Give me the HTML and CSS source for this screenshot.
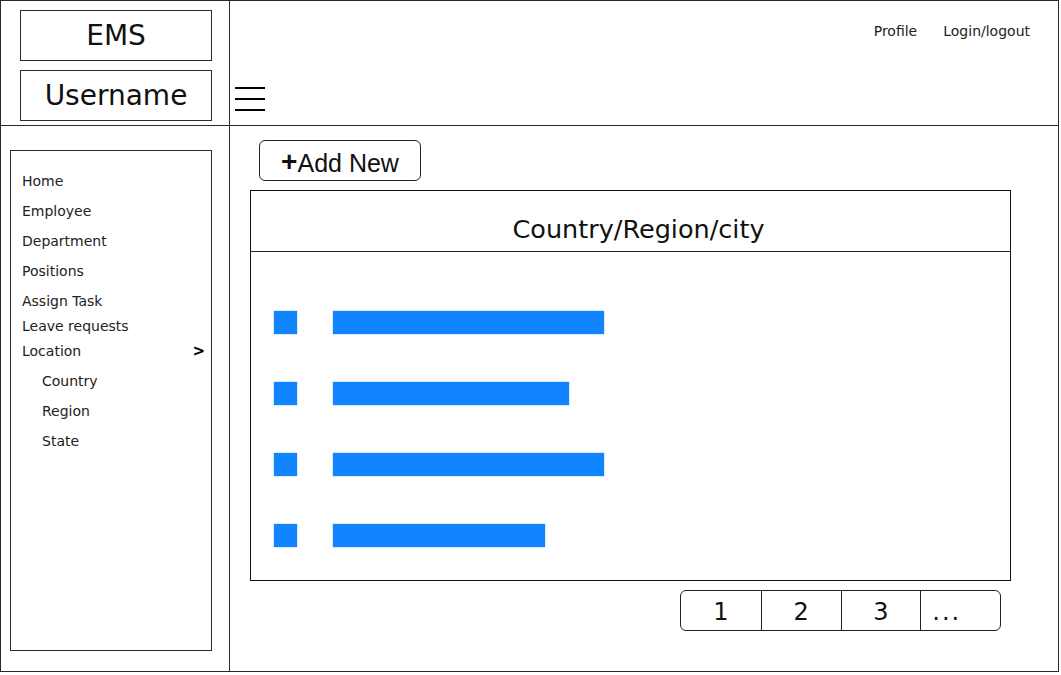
FILE: index.html
```html
<!DOCTYPE html>
<html>
<head>
<meta charset="utf-8">
<link rel="stylesheet" href="styles.css">
</head>
<body>
<div class="app">
  <div class="brand-cell">
    <div class="brand-box">EMS</div>
    <div class="brand-box">Username</div>
  </div>
  <div class="top-cell">
    <div class="top-links">
      <span class="top-link">Profile</span>
      <span class="top-link">Login/logout</span>
    </div>
    <div class="hamburger"><span></span><span></span><span></span></div>
  </div>
  <div class="side-cell">
    <nav class="side-box">
      <div class="nav-item">Home</div>
      <div class="nav-item">Employee</div>
      <div class="nav-item">Department</div>
      <div class="nav-item">Positions</div>
      <div class="nav-item">Assign Task</div>
      <div class="nav-item tight">Leave requests</div>
      <div class="nav-item tight">Location <span class="chev">&gt;</span></div>
      <div class="nav-item sub">Country</div>
      <div class="nav-item sub">Region</div>
      <div class="nav-item sub">State</div>
    </nav>
  </div>
  <main class="main-cell">
    <button class="add-btn"><span class="plus">+</span>Add New</button>
    <section class="table">
      <div class="table-head">Country/Region/city</div>
      <div class="table-body">
        <div class="row"><span class="dot"></span><span class="bar" style="width:271px"></span></div>
        <div class="row"><span class="dot"></span><span class="bar" style="width:236px"></span></div>
        <div class="row"><span class="dot"></span><span class="bar" style="width:271px"></span></div>
        <div class="row"><span class="dot"></span><span class="bar" style="width:212px"></span></div>
      </div>
    </section>
    <div class="pager">
      <div class="page">1</div>
      <div class="page">2</div>
      <div class="page">3</div>
      <div class="page">...</div>
    </div>
  </main>
</div>
</body>
</html>
```
FILE: styles.css
```css
* { box-sizing: border-box; }
html, body { margin: 0; padding: 0; background: #fff; }
body { font-family: "DejaVu Sans", Verdana, sans-serif; color: #1a1a1a; }

.app {
  width: 1059px;
  height: 672px;
  display: grid;
  grid-template-columns: 229px 1fr;
  grid-template-rows: 125px 1fr;
  border: 1px solid #2a2a2a;
}

.brand-cell {
  border-right: 1px solid #2a2a2a;
  border-bottom: 1px solid #2a2a2a;
  padding: 9px 0 0 19px;
  display: flex;
  flex-direction: column;
  gap: 9px;
}
.brand-box {
  width: 192px;
  height: 51px;
  border: 1px solid #2a2a2a;
  display: flex;
  align-items: center;
  justify-content: center;
  font-size: 28px;
  color: #111;
}

.top-cell {
  border-bottom: 1px solid #2a2a2a;
  display: flex;
  flex-direction: column;
  justify-content: space-between;
  padding: 21px 0 14px 5px;
}
.top-links {
  display: flex;
  justify-content: flex-end;
  gap: 26px;
  padding-right: 28px;
  font-size: 14px;
  line-height: 18px;
  color: #222;
}
.hamburger {
  width: 30px;
  display: flex;
  flex-direction: column;
  gap: 9px;
}
.hamburger span {
  display: block;
  height: 2px;
  background: #000;
}

.side-cell {
  border-right: 1px solid #2a2a2a;
  padding: 24px 0 0 9px;
}
.side-box {
  width: 202px;
  height: 501px;
  border: 1px solid #2a2a2a;
  padding: 15px 6px 0 11px;
}
.nav-item {
  height: 30px;
  line-height: 30px;
  font-size: 14px;
  color: #222;
  display: flex;
  justify-content: space-between;
}
.nav-item.tight { margin-top: -5px; }
.nav-item.sub { padding-left: 20px; }
.chev { font-weight: bold; font-size: 15px; color: #000; }

.main-cell {
  padding: 14px 0 0 20px;
  display: flex;
  flex-direction: column;
  align-items: flex-start;
}
.add-btn {
  margin-left: 9px;
  width: 162px;
  height: 41px;
  border: 1px solid #222;
  border-radius: 6px;
  background: #fff;
  font-family: "Liberation Sans", Arial, sans-serif;
  font-size: 25px;
  color: #111;
  padding: 4px 0 0;
  cursor: pointer;
}
.plus { font-size: 28px; font-weight: bold; position: relative; top: -1px; }

.table {
  margin-top: 9px;
  width: 761px;
  height: 391px;
  border: 1px solid #111;
  display: flex;
  flex-direction: column;
}
.table-head {
  height: 61px;
  border-bottom: 1px solid #222;
  display: flex;
  align-items: flex-end;
  justify-content: center;
  padding: 0 0 8px 16px;
  font-size: 25.5px;
  line-height: 28px;
  color: #111;
}
.table-body {
  padding: 59px 0 0 23px;
  display: flex;
  flex-direction: column;
  gap: 48px;
}
.row {
  display: flex;
  gap: 36px;
  height: 23px;
}
.dot, .bar {
  display: block;
  height: 23px;
  background: #1185ff;
  box-shadow: 0 0 1px #1185ff;
}
.dot { width: 23px; }

.pager {
  margin: 9px 0 0 430px;
  width: 321px;
  height: 41px;
  border: 1px solid #222;
  border-radius: 6px;
  display: grid;
  grid-template-columns: repeat(4, 1fr);
}
.page {
  display: flex;
  align-items: center;
  justify-content: center;
  font-size: 24px;
  color: #111;
  border-left: 1px solid #222;
  padding-top: 2px;
}
.page:first-child { border-left: none; }
.page:last-child { justify-content: flex-start; padding-left: 11px; letter-spacing: 2px; }
```
